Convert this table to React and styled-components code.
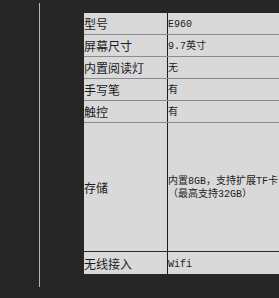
import React from 'react';
import styled, {createGlobalStyle} from 'styled-components';

const GlobalStyle = createGlobalStyle`
  html, body {
    margin: 0;
    padding: 0;
    background: #262626;
    overflow: hidden;
  }
`;

const specs = [
  {label: '型号', value: 'E960'},
  {label: '屏幕尺寸', value: '9.7英寸'},
  {label: '内置阅读灯', value: '无'},
  {label: '手写笔', value: '有'},
  {label: '触控', value: '有'},
  {label: '存储', value: '内置8GB，支持扩展TF卡（最高支持32GB）', tall: true},
  {label: '无线接入', value: 'Wifi', last: true},
];

export default function App() {
  return (
    <Page>
      <GlobalStyle />
      <Rail />
      <SpecTable>
        {specs.map((row) => (
          <Row key={row.label} tall={row.tall} last={row.last}>
            <Label>{row.label}</Label>
            <Value>{row.value}</Value>
          </Row>
        ))}
      </SpecTable>
    </Page>
  );
}

const Page = styled.div`
  display: flex;
  align-items: flex-start;
  width: 279px;
  height: 298px;
  background: #262626;
  font-family: "Noto Sans CJK SC", sans-serif;
`;

const Rail = styled.div`
  flex: none;
  width: 39px;
  height: 284px;
  margin-top: 3px;
  border-right: 1px solid #b4b4b4;
`;

const SpecTable = styled.div`
  flex: none;
  width: 200px;
  margin-left: 44px;
  margin-top: 13px;
  background: #d9d9d9;
  display: flex;
  flex-direction: column;
`;

const Row = styled.div`
  display: grid;
  grid-template-columns: 83px 1fr;
  height: ${props => (props.tall ? 128 : 21)}px;
  border-bottom: 1px solid ${props => (props.tall ? '#2a2a2a' : '#8c8c8c')};
  ${props => props.last && 'border-bottom: none; height: 22px;'}
`;

const Label = styled.div`
  display: flex;
  align-items: center;
  font-size: 12px;
  color: #1c1c1c;
  white-space: nowrap;
  overflow: hidden;
`;

const Value = styled.div`
  display: flex;
  align-items: center;
  width: 111px;
  padding-top: 2px;
  border-left: 1px solid #1e1e1e;
  font-family: "Liberation Mono", "Noto Sans CJK SC", monospace;
  font-size: 10px;
  line-height: 13px;
  color: #1c1c1c;
`;
